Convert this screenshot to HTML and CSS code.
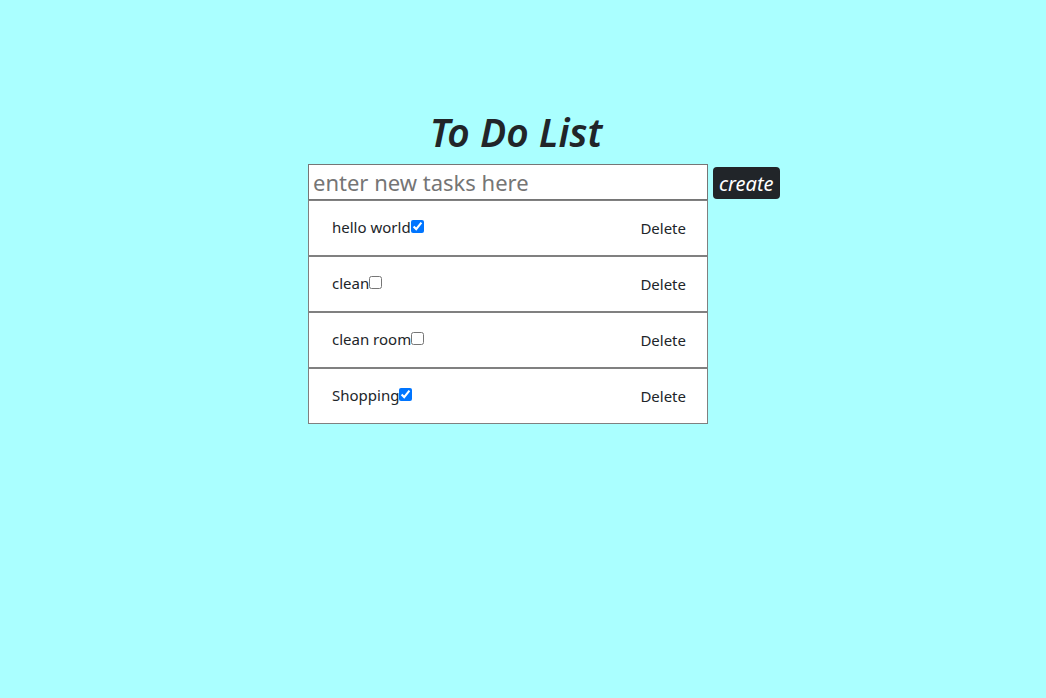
FILE: index.html
```html
<!DOCTYPE html>
<html>
<head>
<meta charset="utf-8">
<link rel="stylesheet" href="styles.css">
</head>
<body>
<div class="page">
  <h1 class="title">To Do List</h1>
  <div class="app">
    <div class="entry">
      <input class="task-input" type="text" placeholder="enter new tasks here">
      <button class="create-btn">create</button>
    </div>
    <ul class="tasks">
      <li class="task"><span class="task-label">hello world<input class="check" type="checkbox" checked></span><button class="delete-btn">Delete</button></li>
      <li class="task"><span class="task-label">clean<input class="check" type="checkbox"></span><button class="delete-btn">Delete</button></li>
      <li class="task"><span class="task-label">clean room<input class="check" type="checkbox"></span><button class="delete-btn">Delete</button></li>
      <li class="task"><span class="task-label">Shopping<input class="check" type="checkbox" checked></span><button class="delete-btn">Delete</button></li>
    </ul>
  </div>
</div>
</body>
</html>
```
FILE: styles.css
```css
html, body {
  margin: 0;
  padding: 0;
  background: #aaffff;
  height: 100%;
}
body {
  font-family: "Noto Sans", "Open Sans", sans-serif;
  color: #212529;
}
.page {
  padding-top: 108px;
}
.title {
  margin: 0 0 8px 0;
  font-size: 39px;
  line-height: 48px;
  font-style: italic;
  font-weight: 600;
  text-align: center;
  padding-right: 14px;
}
.app {
  margin-left: 308px;
  width: 480px;
}
.entry {
  display: flex;
  align-items: center;
  gap: 5px;
}
.task-input {
  box-sizing: border-box;
  width: 400px;
  height: 36px;
  margin: 0;
  border: 1px solid #767676;
  padding: 0 4px;
  font-family: inherit;
  font-size: 22px;
  color: #212529;
  background: #fff;
  outline: none;
}
.task-input::placeholder {
  color: #757575;
}
.create-btn {
  height: 32px;
  margin-top: 2px;
  padding: 0 6px;
  border: none;
  border-radius: 4px;
  background: #212529;
  color: #fff;
  font-family: inherit;
  font-style: italic;
  font-size: 20px;
}
.tasks {
  list-style: none;
  margin: 0;
  padding: 0;
  width: 400px;
}
.task {
  box-sizing: border-box;
  height: 56px;
  border: 1px solid #808080;
  background: #fff;
  display: flex;
  align-items: center;
  justify-content: space-between;
  padding: 0 21px 2px 23px;
  font-size: 15px;
}
.task-label {
  display: inline-flex;
  align-items: flex-start;
}
.check {
  width: 13px;
  height: 13px;
  margin: 3px 0 0 0;
}
.delete-btn {
  border: none;
  background: none;
  padding: 0;
  margin-top: 2px;
  font-family: inherit;
  font-size: 15px;
  color: #212529;
}
```
